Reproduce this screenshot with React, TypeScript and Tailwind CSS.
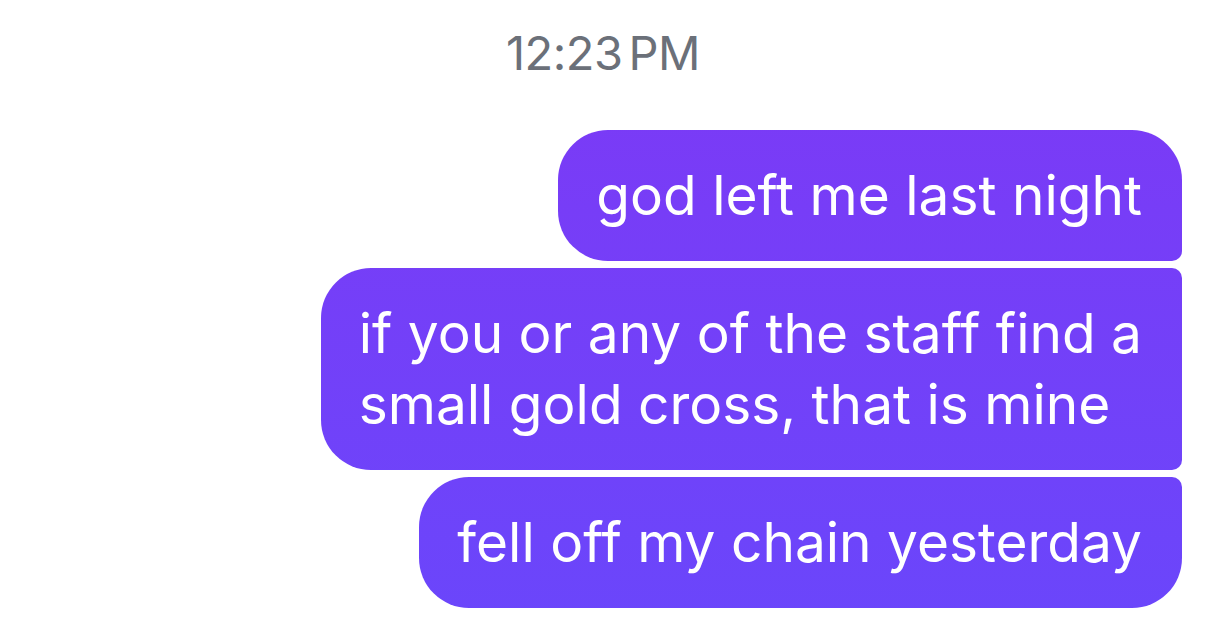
import React from 'react';

type Msg = { lines: string[]; corners: string };

const messages: Msg[] = [
  { lines: ['god left me last night'], corners: 'rounded-[50px] rounded-br-[10px]' },
  {
    lines: ['if you or any of the staff find a', 'small gold cross, that is mine'],
    corners: 'rounded-l-[50px] rounded-r-[10px]',
  },
  { lines: ['fell off my chain yesterday'], corners: 'rounded-[50px] rounded-tr-[10px]' },
];

const Bubble: React.FC<{ msg: Msg }> = ({ msg }) => (
  <div
    className={`bg-fixed bg-linear-to-b from-[#7d38f5] to-[#6a46fb] text-white pl-[38px] pr-[40px] py-[30px] text-[55px] leading-[71px] ${msg.corners}`}
  >
    {msg.lines.map((line, i) => (
      <div key={i} className="whitespace-nowrap">
        {line}
      </div>
    ))}
  </div>
);

export default function App() {
  return (
    <div className="w-[1206px] h-[633px] bg-white overflow-hidden font-['Inter','Noto_Sans',sans-serif]">
      {/* timestamp */}
      <div className="pt-[25px] text-center text-[47px] leading-[56px] text-[#6b7079] tracking-[-0.5px]">
        12:23<span className="ml-[6px]">PM</span>
      </div>

      {/* messages */}
      <div className="mt-[49px] pr-[24px] flex flex-col items-end gap-[7px]">
        {messages.map((m, i) => (
          <Bubble key={i} msg={m} />
        ))}
      </div>
    </div>
  );
}
